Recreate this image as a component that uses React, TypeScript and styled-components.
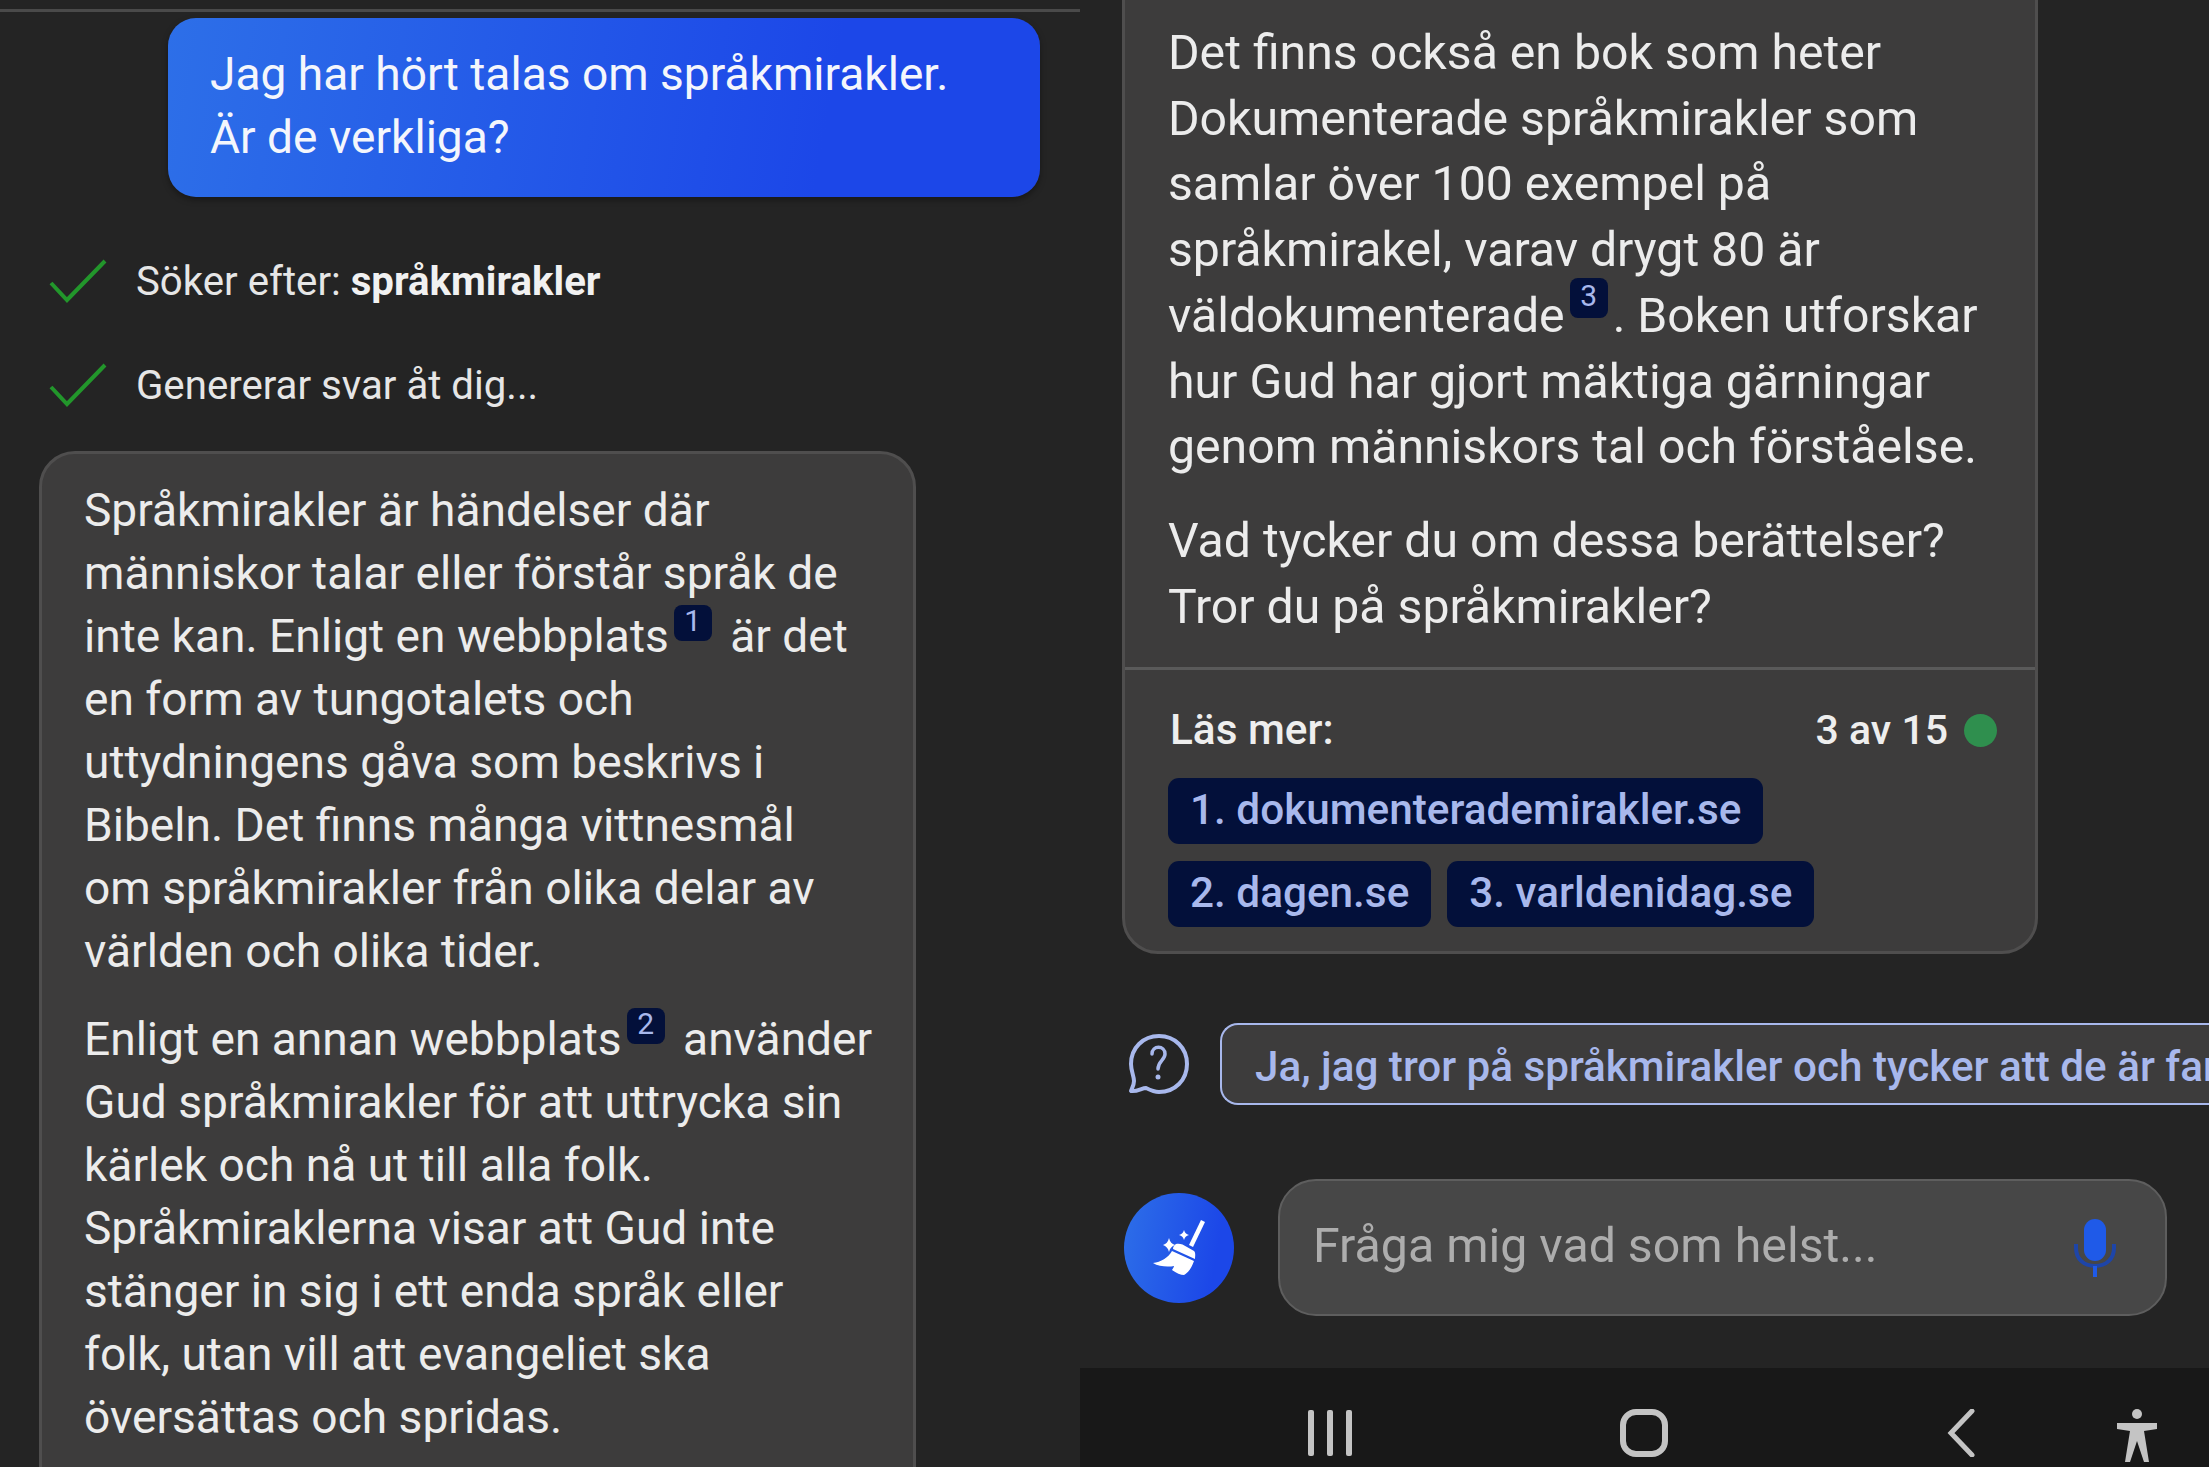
import * as React from 'react';
import styled, { createGlobalStyle } from 'styled-components';

const GlobalStyle = createGlobalStyle`
	html, body {
		margin: 0;
		background: #242424;
	}
	body {
		font-family: Roboto, "Liberation Sans", sans-serif;
		overflow: hidden;
	}
`;

const Page = styled.div`
	width: 2209px;
	height: 1467px;
	display: flex;
	overflow: hidden;
	background: #242424;
`;

const LeftPane = styled.div`
	width: 1080px;
	flex: none;
	display: flex;
	flex-direction: column;
	padding-top: 9px;
	box-sizing: border-box;
`;

const TopRule = styled.div`
	flex: none;
	height: 3px;
	background: #4a4a4a;
`;

const UserBubble = styled.div`
	flex: none;
	align-self: flex-start;
	width: 872px;
	height: 179px;
	margin: 6px 0 0 168px;
	box-sizing: border-box;
	padding: 25px 42px 0;
	border-radius: 28px;
	background: linear-gradient(100deg, #2d6fe8 0%, #1c47e8 75%);
	box-shadow: 0 3px 6px rgba(0, 0, 0, 0.35);
	color: #f4f6fc;
	font-size: 46.1px;
	line-height: 63px;
`;

const StatusRow = styled.div`
	flex: none;
	display: flex;
	align-items: center;
	gap: 27px;
	margin: ${(props: { top: number }) => props.top}px 0 0 49px;
	height: 60px;
	font-size: 40.2px;
	color: #e6e6e6;

	svg {
		flex: none;
	}

	b {
		font-weight: 700;
		color: #f1f1f1;
	}
`;

const Card = styled.div`
	background: #3d3c3c;
	border: 3px solid #4f4e4e;
	box-sizing: border-box;
`;

const LeftCard = styled(Card)`
	flex: none;
	width: 877px;
	margin: 36px 0 0 39px;
	padding: 25px 40px 0 42px;
	border-radius: 36px 36px 0 0;
`;

const Para = styled.p`
	margin: 0 0 25px;
	font-size: 46.1px;
	line-height: 63px;
	color: #ececec;
`;

const Ref = styled.span`
	display: inline-block;
	position: relative;
	top: -8px;
	width: 38px;
	height: 36px;
	margin: 0 7px 0 5px;
	border-radius: 8px;
	background: #03103a;
	color: #a8b8ec;
	font-size: 30px;
	line-height: 32px;
	text-align: center;
	vertical-align: 13px;
`;

const TallRef = styled(Ref)`
	top: -11px;
	height: 40px;
	margin: 0 5px 0 5px;
	line-height: 36px;
	vertical-align: 15px;
`;

const RightPane = styled.div`
	flex: 1;
	min-width: 0;
	display: flex;
	flex-direction: column;
`;

const RightCard = styled(Card)`
	flex: none;
	width: 916px;
	margin: -3px 0 0 42px;
	border-radius: 0 0 36px 36px;
`;

const CardBody = styled.div`
	padding: 20px 30px 0 43px;

	p {
		margin: 0 0 28px;
		font-size: 48.2px;
		line-height: 65.7px;
		color: #ececec;
	}
`;

const CardFooter = styled.div`
	border-top: 3px solid #5a5a5a;
	margin-top: 2px;
	padding: 35px 38px 24px 45px;
`;

const FooterHead = styled.div`
	display: flex;
	align-items: center;
	justify-content: space-between;
	font-size: 42.3px;
	font-weight: 500;
	color: #eeeeee;
	line-height: 50px;
`;

const Count = styled.div`
	display: flex;
	align-items: center;
	gap: 16px;
	font-size: 41px;
`;

const GreenDot = styled.span`
	width: 33px;
	height: 33px;
	border-radius: 50%;
	background: #2f8f4e;
`;

const Sources = styled.div`
	display: flex;
	flex-wrap: wrap;
	gap: 17px 16px;
	margin: 23px 0 0 -2px;
	width: 700px;
`;

const SourceChip = styled.div`
	height: 66px;
	padding: 0 22px;
	border-radius: 11px;
	background: #03103a;
	color: #a8b8ec;
	font-size: 42.3px;
	font-weight: 500;
	line-height: 64px;
`;

const SuggestRow = styled.div`
	flex: none;
	display: flex;
	align-items: center;
	margin: 69px 0 0 48px;
	gap: 30px;

	svg {
		flex: none;
	}
`;

const SuggestChip = styled.div`
	flex: none;
	width: 1000px;
	height: 82px;
	box-sizing: border-box;
	padding-left: 33px;
	border: 2px solid #a8b8ec;
	border-right: 0;
	border-radius: 18px 0 0 18px;
	background: #3d3c3c;
	color: #a8b8ec;
	font-size: 42.2px;
	font-weight: 500;
	line-height: 84px;
	white-space: nowrap;
	overflow: hidden;
`;

const InputRow = styled.div`
	flex: none;
	display: flex;
	align-items: center;
	margin: 74px 0 0 44px;
	gap: 44px;
`;

const BroomButton = styled.div`
	width: 110px;
	height: 110px;
	flex: none;
	border-radius: 50%;
	background: linear-gradient(100deg, #2d6fe8 0%, #1c47e8 80%);
`;

const InputBox = styled.div`
	width: 889px;
	height: 137px;
	box-sizing: border-box;
	display: flex;
	align-items: center;
	justify-content: space-between;
	padding: 0 49px 0 33px;
	border: 2px solid #5e5e5e;
	border-radius: 38px;
	background: #474747;
	color: #adadad;
	font-size: 48.3px;

	span {
		margin-bottom: 4px;
	}
`;

const NavBar = styled.div`
	flex: none;
	margin-top: auto;
	height: 99px;
	background: #181818;
	display: flex;
	align-items: flex-start;
	padding-top: 41px;
	box-sizing: border-box;
`;

const NavSlot = styled.div`
	margin-left: ${(props: { left: number }) => props.left}px;
	flex: none;
	display: flex;
`;

const Check = () => (
	<svg width="60" height="44" viewBox="0 0 60 44" fill="none">
		<path d="M2 24 L18 41 L56 2" stroke="#22962b" strokeWidth="4" strokeLinejoin="miter" />
	</svg>
);

const Broom = () => (
	<svg width="110" height="110" viewBox="-55 -55 110 110" fill="#fff">
		<path d="M22 -28 L26 -26 L14 -1 L10 -3 Z" />
		<path d="M-3 -4 C0 -5 4 -4 8 -1 L15 3 C17 5 16 9 16 11 L-6 1 C-6 -1 -5 -3 -3 -4 Z" />
		<path d="M-7 3 L15 13 C13 19 10 24 5 27 C2 27 -3 25 -7 22 C-6 20 -5 19 -5 18 C-10 19 -20 19 -26 15 C-18 14 -11 10 -7 3 Z" />
		<path d="M5 -18 C6 -15 7 -14 10 -13 C7 -12 6 -11 5 -8 C4 -11 3 -12 0 -13 C3 -14 4 -15 5 -18 Z" />
		<path d="M-10 -10 C-9 -6 -7 -4 -4 -3 C-7 -2 -9 0 -10 4 C-11 0 -13 -2 -16 -3 C-13 -4 -11 -6 -10 -10 Z" />
	</svg>
);

const Question = () => (
	<svg width="62" height="62" viewBox="0 0 62 62" fill="none" stroke="#a8b8ec" strokeWidth="4">
		<path d="M31 3 C15 3 3 15 3 31 C3 38 6 43 6 48 C6 52 4 55 3 58 C9 59 14 55 18 55 C22 57 26 59 31 59 C47 59 59 47 59 31 C59 15 47 3 31 3 Z" strokeLinejoin="round" />
		<path d="M24 21 C24 12 37 12 37 21 C37 27 30 28 30 36" strokeLinecap="round" strokeWidth="3.5" />
		<circle cx="30" cy="44" r="2.5" fill="#a8b8ec" stroke="none" />
	</svg>
);

const Mic = () => (
	<svg width="42" height="60" viewBox="0 0 42 60" fill="none">
		<rect x="10" y="1" width="22" height="42" rx="11" fill="#1f5ae8" />
		<path d="M2 26 V30 C2 41 10 48 21 48 C32 48 40 41 40 30 V26" stroke="#1e45a8" strokeWidth="4" />
		<path d="M21 48 V59" stroke="#1f5ae8" strokeWidth="4" />
	</svg>
);

const NavRecents = () => (
	<svg width="44" height="48" viewBox="0 0 44 48" fill="#c4c4c4">
		<rect x="0" y="1" width="6" height="46" rx="2" />
		<rect x="19" y="1" width="6" height="46" rx="2" />
		<rect x="38" y="1" width="6" height="46" rx="2" />
	</svg>
);

const NavHome = () => (
	<svg width="48" height="48" viewBox="0 0 48 48" fill="none">
		<rect x="3" y="3" width="42" height="42" rx="13" stroke="#c4c4c4" strokeWidth="6" />
	</svg>
);

const NavBack = () => (
	<svg width="28" height="48" viewBox="0 0 28 48" fill="none">
		<path d="M25 2 L4 24 L25 46" stroke="#c4c4c4" strokeWidth="5" strokeLinecap="round" />
	</svg>
);

const NavPerson = () => (
	<svg width="44" height="54" viewBox="0 0 44 54" fill="#c4c4c4">
		<circle cx="22" cy="5" r="5" />
		<path d="M2 14 H42 V20 L29 22 L34 53 H29 L22 32 L15 53 H10 L15 22 L2 20 Z" />
	</svg>
);

const App = () => (
	<Page>
		<GlobalStyle />
		<LeftPane>
			<TopRule />
			<UserBubble>
				Jag har hört talas om språkmirakler.
				<br />
				Är de verkliga?
			</UserBubble>
			<StatusRow top={54}>
				<Check />
				<span>Söker efter: <b>språkmirakler</b></span>
			</StatusRow>
			<StatusRow top={44}>
				<Check />
				<span>Genererar svar åt dig...</span>
			</StatusRow>
			<LeftCard>
				<Para>
					Språkmirakler är händelser där
					<br />
					människor talar eller förstår språk de
					<br />
					inte kan. Enligt en webbplats<Ref>1</Ref> är det
					<br />
					en form av tungotalets och
					<br />
					uttydningens gåva som beskrivs i
					<br />
					Bibeln. Det finns många vittnesmål
					<br />
					om språkmirakler från olika delar av
					<br />
					världen och olika tider.
				</Para>
				<Para>
					Enligt en annan webbplats<Ref>2</Ref> använder
					<br />
					Gud språkmirakler för att uttrycka sin
					<br />
					kärlek och nå ut till alla folk.
					<br />
					Språkmiraklerna visar att Gud inte
					<br />
					stänger in sig i ett enda språk eller
					<br />
					folk, utan vill att evangeliet ska
					<br />
					översättas och spridas.
				</Para>
			</LeftCard>
		</LeftPane>
		<RightPane>
			<RightCard>
				<CardBody>
					<p>
						Det finns också en bok som heter
						<br />
						Dokumenterade språkmirakler som
						<br />
						samlar över 100 exempel på
						<br />
						språkmirakel, varav drygt 80 är
						<br />
						väldokumenterade<TallRef>3</TallRef>. Boken utforskar
						<br />
						hur Gud har gjort mäktiga gärningar
						<br />
						genom människors tal och förståelse.
					</p>
					<p>
						Vad tycker du om dessa berättelser?
						<br />
						Tror du på språkmirakler?
					</p>
				</CardBody>
				<CardFooter>
					<FooterHead>
						<span>Läs mer:</span>
						<Count>
							3 av 15
							<GreenDot />
						</Count>
					</FooterHead>
					<Sources>
						<SourceChip>1. dokumenterademirakler.se</SourceChip>
						<SourceChip>2. dagen.se</SourceChip>
						<SourceChip>3. varldenidag.se</SourceChip>
					</Sources>
				</CardFooter>
			</RightCard>
			<SuggestRow>
				<Question />
				<SuggestChip>Ja, jag tror på språkmirakler och tycker att de är fan</SuggestChip>
			</SuggestRow>
			<InputRow>
				<BroomButton>
					<Broom />
				</BroomButton>
				<InputBox>
					<span>Fråga mig vad som helst...</span>
					<Mic />
				</InputBox>
			</InputRow>
			<NavBar>
				<NavSlot left={228}><NavRecents /></NavSlot>
				<NavSlot left={268}><NavHome /></NavSlot>
				<NavSlot left={279}><NavBack /></NavSlot>
				<NavSlot left={140}><NavPerson /></NavSlot>
			</NavBar>
		</RightPane>
	</Page>
);

export default App;
